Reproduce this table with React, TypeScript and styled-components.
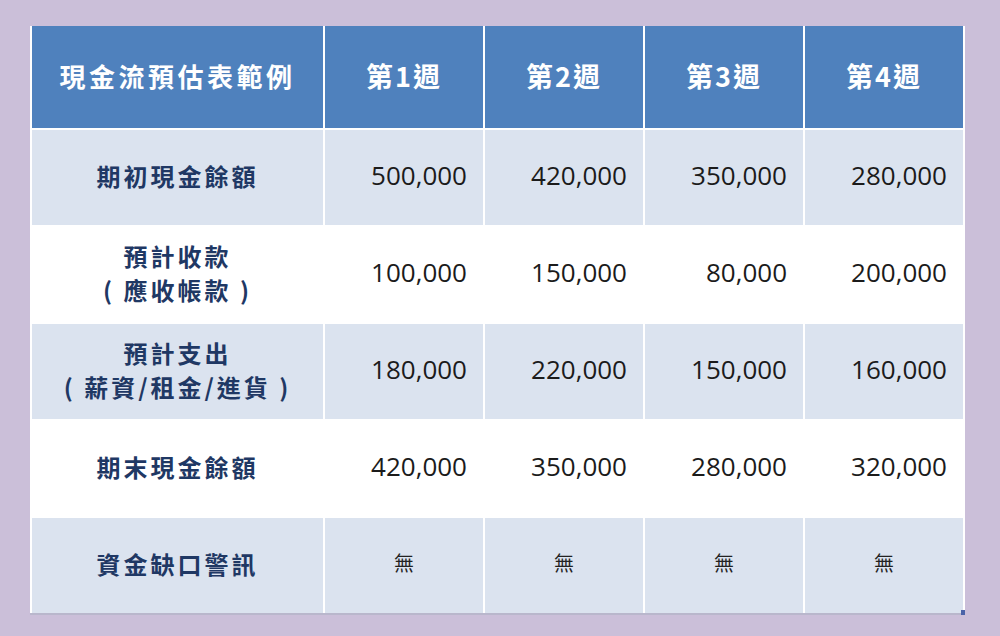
import React from "react";
import styled, { createGlobalStyle } from "styled-components";

const GlobalStyle = createGlobalStyle`
  html, body {
    margin: 0;
    padding: 0;
    background: #cbbfd9;
  }
  body {
    width: 1000px;
    height: 636px;
    overflow: hidden;
    font-family: "Open Sans", "Noto Sans CJK TC", sans-serif;
  }
`;

const Page = styled.div`
  width: 1000px;
  height: 636px;
  box-sizing: border-box;
  padding: 26px 0 0 30px;
  background: #cbbfd9;
`;

const Table = styled.div`
  position: relative;
  width: 935px;
  box-sizing: border-box;
  display: grid;
  grid-template-columns: 291px repeat(4, 158px);
  grid-template-rows: 102px repeat(5, 95px);
  gap: 2px;
  padding: 0 2px;
  background: #ffffff;
  border-bottom: 2px solid #b9b7cc;
`;

const HeaderCell = styled.div<{ $wide?: boolean }>`
  background: #4f81bd;
  color: #ffffff;
  display: flex;
  align-items: center;
  justify-content: center;
  padding-bottom: 4px;
  font-family: "Noto Sans CJK TC", "Noto Sans", sans-serif;
  font-weight: 700;
  font-size: ${(p) => (p.$wide ? "26px" : "27px")};
  letter-spacing: ${(p) => (p.$wide ? "3.5px" : "2px")};
`;

const LabelCell = styled.div<{ $shade: boolean }>`
  background: ${(p) => (p.$shade ? "#dbe3ef" : "#ffffff")};
  color: #1f3864;
  display: flex;
  flex-direction: column;
  align-items: center;
  justify-content: center;
  padding-bottom: 4px;
  font-family: "Noto Sans CJK TC", "Noto Sans", sans-serif;
  font-weight: 700;
  font-size: 24px;
  line-height: 34px;
  letter-spacing: 3px;
  text-align: center;
  white-space: pre;
`;

const NumberCell = styled.div<{ $shade: boolean }>`
  background: ${(p) => (p.$shade ? "#dbe3ef" : "#ffffff")};
  color: #1b1b1b;
  display: flex;
  align-items: center;
  justify-content: flex-end;
  padding-right: 16px;
  padding-bottom: 5px;
  font-family: "Open Sans", sans-serif;
  font-size: 26px;
`;

const NoneCell = styled.div<{ $shade: boolean }>`
  background: ${(p) => (p.$shade ? "#dbe3ef" : "#ffffff")};
  color: #222222;
  display: flex;
  align-items: center;
  justify-content: center;
  padding-bottom: 6px;
  font-family: "Noto Sans CJK TC", sans-serif;
  font-size: 20px;
`;

const CornerMark = styled.div`
  position: absolute;
  right: 0;
  bottom: -2px;
  width: 4px;
  height: 5px;
  background: #4a63a8;
`;

type Row = {
  label: string[];
  values?: string[];
};

const headers = ["第1週", "第2週", "第3週", "第4週"];

const rows: Row[] = [
  { label: ["期初現金餘額"], values: ["500,000", "420,000", "350,000", "280,000"] },
  { label: ["預計收款", "( 應收帳款 )"], values: ["100,000", "150,000", "80,000", "200,000"] },
  { label: ["預計支出", "( 薪資/租金/進貨 )"], values: ["180,000", "220,000", "150,000", "160,000"] },
  { label: ["期末現金餘額"], values: ["420,000", "350,000", "280,000", "320,000"] },
  { label: ["資金缺口警訊"] },
];

export default function App() {
  return (
    <>
      <GlobalStyle />
      <Page>
        <Table>
          <HeaderCell $wide>現金流預估表範例</HeaderCell>
          {headers.map((h) => (
            <HeaderCell key={h}>{h}</HeaderCell>
          ))}
          {rows.map((r, i) => {
            const shade = i % 2 === 0;
            return (
              <React.Fragment key={i}>
                <LabelCell $shade={shade}>
                  {r.label.map((l) => (
                    <span key={l}>{l}</span>
                  ))}
                </LabelCell>
                {r.values
                  ? r.values.map((v, j) => (
                      <NumberCell key={j} $shade={shade}>
                        {v}
                      </NumberCell>
                    ))
                  : [0, 1, 2, 3].map((j) => (
                      <NoneCell key={j} $shade={shade}>
                        無
                      </NoneCell>
                    ))}
              </React.Fragment>
            );
          })}
          <CornerMark />
        </Table>
      </Page>
    </>
  );
}
